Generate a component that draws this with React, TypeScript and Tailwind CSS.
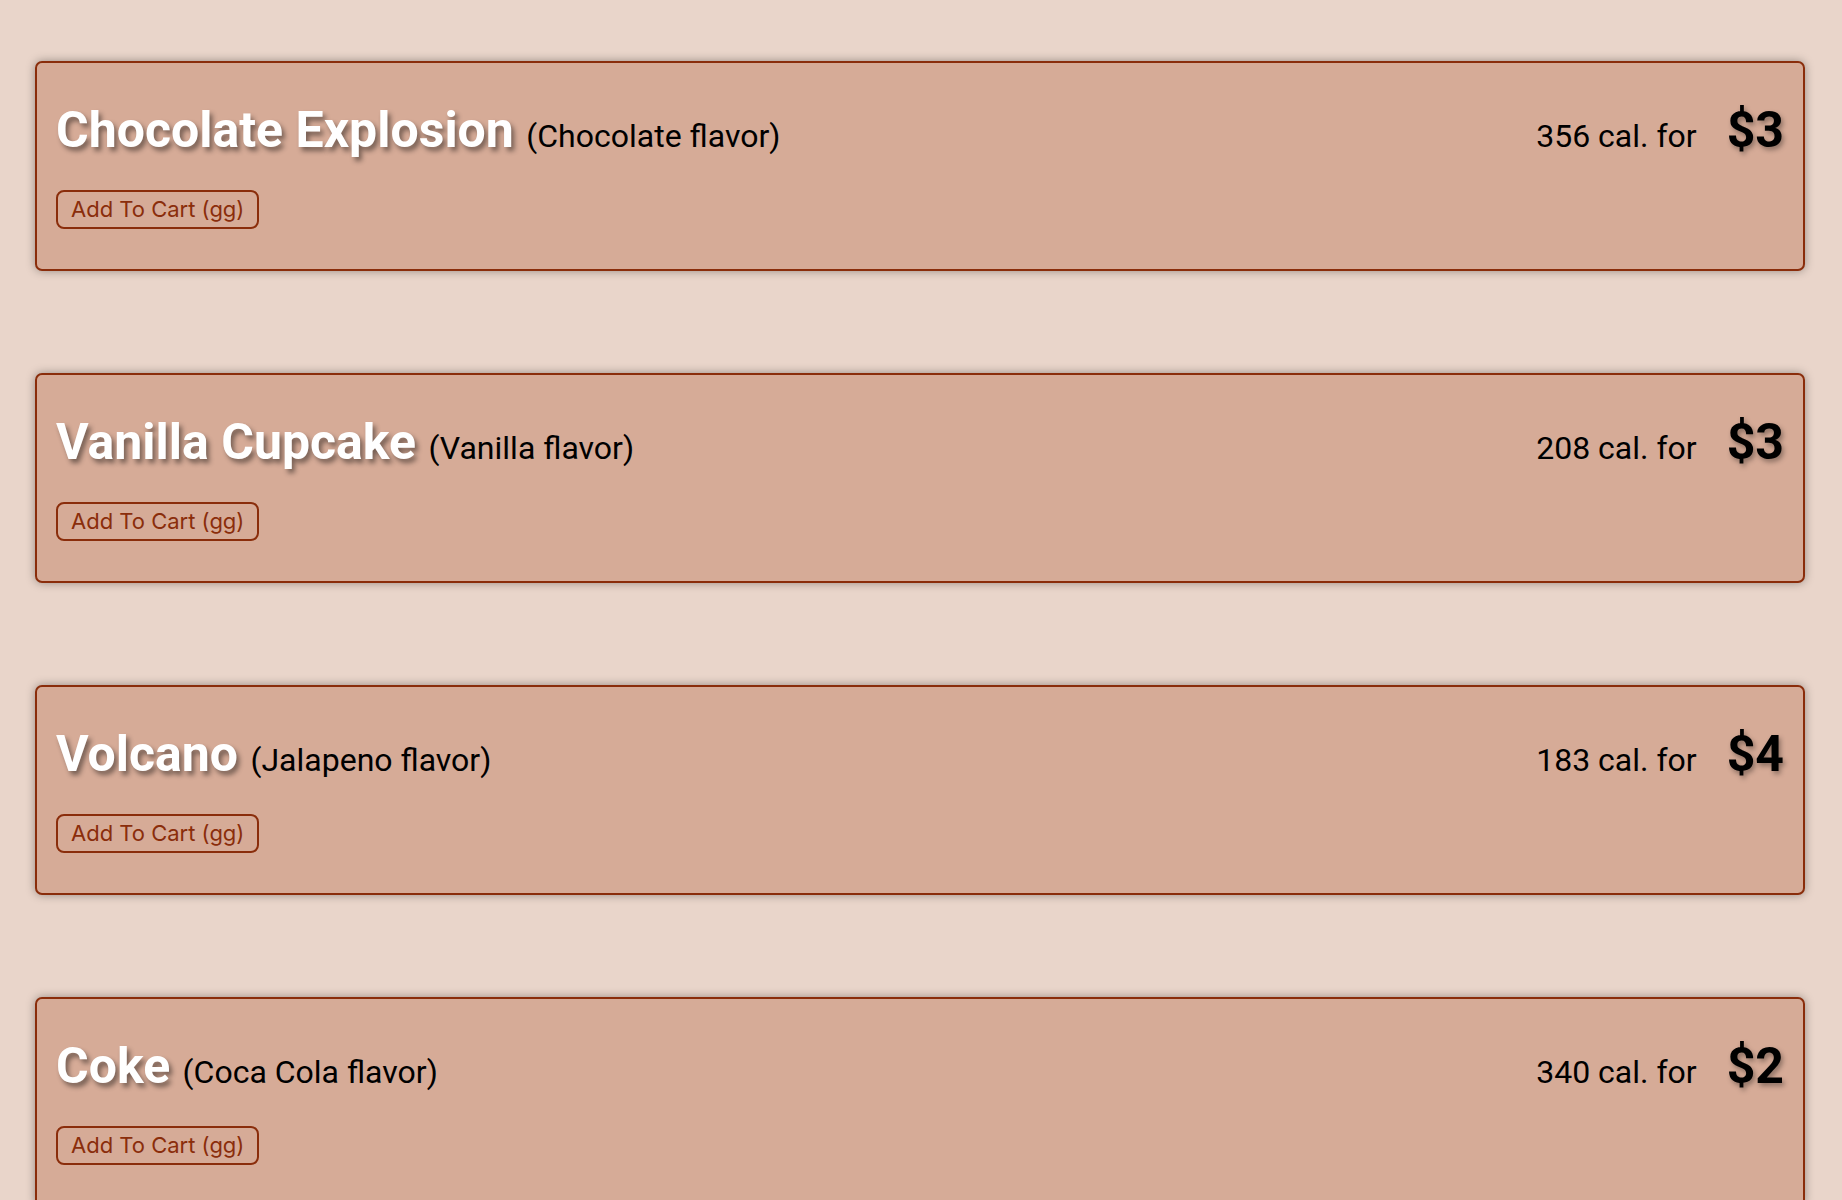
import React from "react";

const items = [
  { name: "Chocolate Explosion", flavor: "Chocolate", cal: 356, price: 3 },
  { name: "Vanilla Cupcake", flavor: "Vanilla", cal: 208, price: 3 },
  { name: "Volcano", flavor: "Jalapeno", cal: 183, price: 4 },
  { name: "Coke", flavor: "Coca Cola", cal: 340, price: 2 },
];

export default function App() {
  return (
    <div className="min-h-screen bg-[#e9d5ca] pl-[35px] pr-[37px] pt-[61px] pb-[60px] font-['Roboto',sans-serif]">
      <div className="flex flex-col gap-[102px]">
        {items.map((item) => (
          <div
            key={item.name}
            className="h-[210px] rounded-[7px] border-2 border-[#8a2d0b] bg-[#d6ab97] px-[19px] pt-[38px] shadow-[0_0_10px_rgba(0,0,0,0.35)]"
          >
            <div className="flex items-baseline justify-between">
              <h2 className="text-[50px] leading-[58px] font-bold text-white [text-shadow:3px_4px_5px_rgba(0,0,0,0.45)]">
                {item.name}{" "}
                <span className="text-[32px] font-normal text-black [text-shadow:none]">
                  ({item.flavor} flavor)
                </span>
              </h2>
              <div className="flex items-baseline gap-[30px]">
                <span className="text-[32px] text-black">{item.cal} cal. for</span>
                <span className="text-[50px] leading-[58px] font-bold text-black [text-shadow:2px_3px_5px_rgba(0,0,0,0.35)]">
                  ${item.price}
                </span>
              </div>
            </div>
            <button className="mt-[25px] h-[39px] rounded-[8px] border-2 border-[#8a2d0b] px-[13px] font-['Inter',sans-serif] text-[22px] text-[#8a2d0b]">
              Add To Cart (gg)
            </button>
          </div>
        ))}
      </div>
    </div>
  );
}
